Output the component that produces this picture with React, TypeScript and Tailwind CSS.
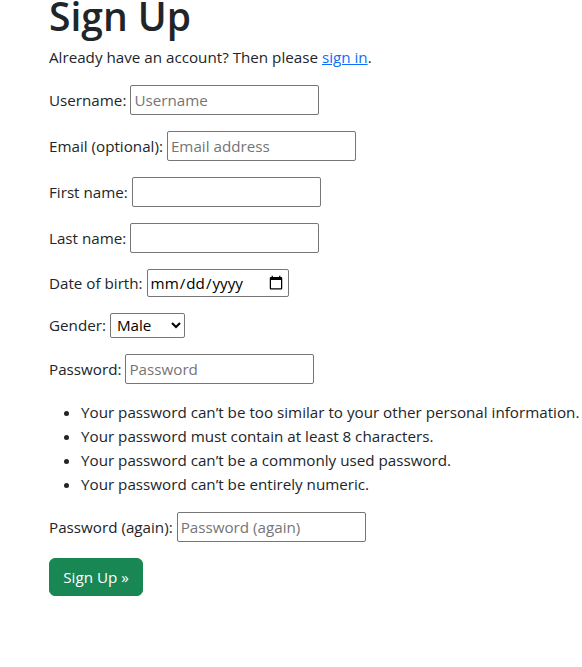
import React from 'react';

const fieldClass =
  'h-[30px] w-[189px] rounded-[2px] border border-[#767676] px-[3px] text-[15.2px] text-[#212529] placeholder:text-[#757575] outline-none';

const FormRow = ({ label, children }: { label: string; children: React.ReactNode }) => (
  <div className="mb-4 flex items-center gap-[4px]">
    <label className="whitespace-nowrap">{label}</label>
    {children}
  </div>
);

const passwordRules = [
  'Your password can\u2019t be too similar to your other personal information.',
  'Your password must contain at least 8 characters.',
  'Your password can\u2019t be a commonly used password.',
  'Your password can\u2019t be entirely numeric.',
];

export default function App() {
  return (
    <div className="min-h-[667px] bg-white pl-[49px] text-[15.2px] leading-6 text-[#212529] font-['Open_Sans',sans-serif]">
      <h1 className="-mt-[7px] mb-[5px] text-[39px] font-semibold leading-[1.2]">Sign Up</h1>
      <p className="mb-4">
        Already have an account? Then please{' '}
        <a href="#" className="text-[#0d6efd] underline">
          sign in
        </a>
        .
      </p>

      <form onSubmit={(e) => e.preventDefault()}>
        <FormRow label="Username:">
          <input type="text" placeholder="Username" className={fieldClass} />
        </FormRow>
        <FormRow label="Email (optional):">
          <input type="email" placeholder="Email address" className={fieldClass} />
        </FormRow>
        <FormRow label="First name:">
          <input type="text" className={fieldClass} />
        </FormRow>
        <FormRow label="Last name:">
          <input type="text" className={fieldClass} />
        </FormRow>
        <FormRow label="Date of birth:">
          <input
            type="date"
            className="h-[28px] w-[142px] rounded-[2px] border border-[#767676] px-[2px] text-[15.2px] text-black"
          />
        </FormRow>
        <FormRow label="Gender:">
          <select
            defaultValue="M"
            className="h-[25px] w-[75px] rounded-[2px] border border-[#767676] bg-white px-[2px] text-[15.2px] text-black"
          >
            <option value="M">Male</option>
            <option value="F">Female</option>
          </select>
        </FormRow>
        <FormRow label="Password:">
          <input type="password" placeholder="Password" className={fieldClass} />
        </FormRow>

        <ul className="mb-4 list-disc pl-8">
          {passwordRules.map((rule) => (
            <li key={rule} className="whitespace-nowrap">{rule}</li>
          ))}
        </ul>

        <FormRow label="Password (again):">
          <input type="password" placeholder="Password (again)" className={fieldClass} />
        </FormRow>

        <button
          type="submit"
          className="h-[38px] w-[94px] rounded-[6px] border border-[#198754] bg-[#198754] text-[15.2px] text-white"
        >
          Sign Up &raquo;
        </button>
      </form>
    </div>
  );
}
